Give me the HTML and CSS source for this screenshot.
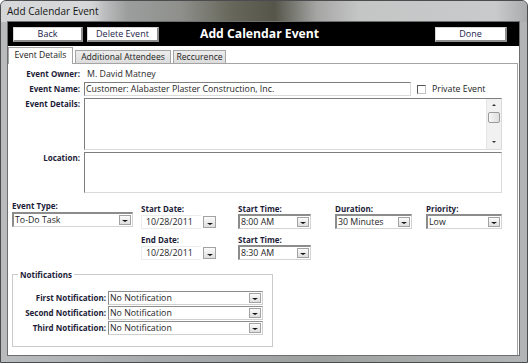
FILE: index.html
```html
<!DOCTYPE html>
<html>
<head>
<meta charset="utf-8">
<link rel="stylesheet" href="styles.css">
</head>
<body>
<div class="window">
  <div class="titlebar"><span class="ttext">Add Calendar Event</span></div>
  <div class="frame">
    <div class="client">
      <div class="header">
        <div class="btn btn-back">Back</div>
        <div class="btn btn-del">Delete Event</div>
        <div class="htitle">Add Calendar Event</div>
        <div class="btn btn-done">Done</div>
      </div>
      <div class="tabs">
        <div class="tab active">Event Details</div>
        <div class="tab t-att">Additional Attendees</div>
        <div class="tab t-rec">Reccurence</div>
      </div>
      <div class="panel">
        <div class="form">
          <div class="lbl">Event Owner:</div>
          <div class="val">M. David Matney</div>

          <div class="lbl lbl-mid">Event Name:</div>
          <div class="namerow">
            <div class="input name-input">Customer: Alabaster Plaster Construction, Inc.</div>
            <div class="check"></div>
            <div class="checklbl">Private Event</div>
          </div>

          <div class="lbl">Event Details:</div>
          <div class="ta ta-details">
            <div class="sb">
              <span class="sb-up"></span>
              <span class="sb-thumb"></span>
              <span class="sb-fill"></span>
              <span class="sb-down"></span>
            </div>
          </div>

          <div class="lbl lbl-loc">Location:</div>
          <div class="ta ta-loc"></div>
        </div>

        <div class="fields">
          <div class="col col-type">
            <div class="flbl">Event Type:</div>
            <div class="select"><span class="sv">To-Do Task</span><span class="arrow"></span></div>
          </div>
          <div class="col col-date">
            <div class="flbl">Start Date:</div>
            <div class="date"><span class="dbox">10/28/2011</span><span class="arrow darrow"></span></div>
            <div class="flbl flbl2">End Date:</div>
            <div class="date"><span class="dbox">10/28/2011</span><span class="arrow darrow"></span></div>
          </div>
          <div class="col col-time">
            <div class="flbl">Start Time:</div>
            <div class="select"><span class="sv">8:00 AM</span><span class="arrow"></span></div>
            <div class="flbl flbl2">Start Time:</div>
            <div class="select"><span class="sv">8:30 AM</span><span class="arrow"></span></div>
          </div>
          <div class="col col-dur">
            <div class="flbl">Duration:</div>
            <div class="select"><span class="sv">30 Minutes</span><span class="arrow"></span></div>
          </div>
          <div class="col col-pri">
            <div class="flbl">Priority:</div>
            <div class="select"><span class="sv">Low</span><span class="arrow"></span></div>
          </div>
        </div>

        <fieldset class="notif">
          <legend>Notifications</legend>
          <div class="ngrid">
            <div class="nlbl">First Notification:</div>
            <div class="select nsel"><span class="sv">No Notification</span><span class="arrow"></span></div>
            <div class="nlbl">Second Notification:</div>
            <div class="select nsel"><span class="sv">No Notification</span><span class="arrow"></span></div>
            <div class="nlbl">Third Notification:</div>
            <div class="select nsel"><span class="sv">No Notification</span><span class="arrow"></span></div>
          </div>
        </fieldset>
      </div>
    </div>
  </div>
</div>
</body>
</html>
```

FILE: styles.css
```css
* { box-sizing: border-box; }
html, body { margin: 0; padding: 0; }
body {
  width: 528px;
  height: 363px;
  overflow: hidden;
  background: #fff;
  font-family: "Open Sans", "Noto Sans", sans-serif;
  font-size: 8.8px;
  color: #222;
}

.window {
  width: 528px;
  height: 363px;
  display: flex;
  flex-direction: column;
  border: 1px solid #4a4c4e;
  border-radius: 6px 6px 0 0;
  background: linear-gradient(90deg, #b9bbbd 0%, #a7a9ab 30%, #9fa1a1 60%, #b2b4b5 100%);
  overflow: hidden;
}

.titlebar {
  flex: none;
  height: 21px;
  padding-left: 6px;
  font-size: 10px;
  line-height: 21px;
  color: #151515;
  background: linear-gradient(90deg, #d4d6d7 0%, #cfd1d2 17%, #9c9e9e 24%, #8f908c 34%, #66665a 44%, #55554a 52%, #a5a6a4 60%, #c4c5c5 68%, #c9cacb 94%, #a9abac 100%);
}
.ttext {
  display: inline-block;
  padding-right: 4px;
  background: linear-gradient(90deg, rgba(214,216,217,0.9) 0%, rgba(214,216,217,0.9) 80%, rgba(214,216,217,0) 100%);
}

.frame {
  flex: 1;
  display: flex;
  padding: 0 8px 7px 7px;
}

.client {
  flex: 1;
  display: flex;
  flex-direction: column;
  background: #fff;
  outline: 1px solid #6c6e70;
}

/* header */
.header {
  height: 24px;
  background: #000;
  display: flex;
  align-items: center;
  padding: 0 12px 0 5px;
}
.btn {
  height: 15px;
  background: #fff;
  border-style: solid;
  border-width: 1px 2px 2px 1px;
  border-color: #d6d6d6 #8e8e8e #8e8e8e #d6d6d6;
  color: #1c1c4a;
  text-align: center;
  font-size: 9px;
  line-height: 12px;
}
.btn-back { width: 70px; }
.btn-del { width: 72px; margin-left: 4px; }
.btn-done { width: 72px; margin-left: auto; }
.htitle {
  margin-left: 41px;
  color: #fff;
  font-weight: bold;
  font-size: 12.2px;
  line-height: 16px;
}

/* tabs */
.tabs {
  height: 17px;
  display: flex;
  align-items: flex-end;
  padding-top: 2px;
  position: relative;
  z-index: 1;
}
.tab {
  height: 13px;
  border: 1px solid #a4a4a4;
  border-bottom: none;
  background: linear-gradient(#ececec, #dcdcdc);
  color: #222;
  font-size: 8.6px;
  line-height: 12px;
  text-align: center;
  margin-left: 2px;
}
.tab.active {
  width: 65px;
  margin-left: 0;
  background: #fff;
  line-height: 14px;
  margin-bottom: -1px;
  height: 17px;
}
.t-att { width: 96px; }
.t-rec { width: 53px; }

/* panel */
.panel {
  flex: 1;
  border-top: 1px solid #a4a4a4;
  border-right: 1px solid #a4a4a4;
  margin-right: 1px;
  padding-top: 4px;
}

.form {
  display: grid;
  grid-template-columns: 72px 418px;
  grid-template-rows: 12px 14px 52px 41px;
  column-gap: 4px;
  row-gap: 2px;
}
.lbl {
  text-align: right;
  font-weight: bold;
  font-size: 8px;
  color: #1c1c38;
  line-height: 12px;
}
.lbl-mid { line-height: 14px; }
.lbl-loc { line-height: 11px; }
.val {
  padding-left: 3px;
  line-height: 12px;
  color: #2a2a2a;
}

.input, .ta {
  border: 1px solid;
  border-color: #7e7e7e #dadada #dadada #7e7e7e;
  background: #fff;
}
.namerow {
  display: flex;
  align-items: center;
}
.name-input {
  width: 327px;
  height: 14px;
  padding-left: 1px;
  line-height: 12px;
  color: #1e1e1e;
  white-space: nowrap;
  overflow: hidden;
}
.check {
  width: 9px;
  height: 9px;
  margin-left: 6px;
  border: 1px solid;
  border-color: #555 #c4c4c4 #c4c4c4 #555;
  background: #fff;
}
.checklbl {
  margin-left: 6px;
  color: #222;
}

.ta-details {
  display: flex;
  justify-content: flex-end;
}
.sb {
  width: 15px;
  background: #f1f1f1;
  border-left: 1px solid #e6e6e6;
  display: flex;
  flex-direction: column;
  align-items: center;
}
.sb-up {
  margin-top: 5px;
  width: 0;
  height: 0;
  border-left: 2px solid transparent;
  border-right: 2px solid transparent;
  border-bottom: 2px solid #333;
}
.sb-thumb {
  margin-top: 6px;
  width: 12px;
  height: 11px;
  border: 1px solid #9a9a9a;
  border-radius: 2px;
  background: linear-gradient(90deg, #f6f6f6, #dedede);
}
.sb-fill { flex: 1; }
.sb-down {
  margin-bottom: 6px;
  width: 0;
  height: 0;
  border-left: 2px solid transparent;
  border-right: 2px solid transparent;
  border-top: 2px solid #333;
}

/* fields */
.fields {
  display: flex;
  align-items: flex-start;
  padding-left: 4px;
  margin-top: 7px;
}
.col { display: flex; flex-direction: column; }
.col-type { width: 121px; }
.col-date { width: 75px; margin-left: 8px; margin-top: 3px; }
.col-time { width: 73px; margin-left: 22px; margin-top: 3px; }
.col-dur { width: 77px; margin-left: 24px; margin-top: 3px; }
.col-pri { width: 76px; margin-left: 14px; margin-top: 3px; }
.flbl {
  font-weight: bold;
  font-size: 8px;
  color: #1c1c38;
  line-height: 11px;
  margin-bottom: 1px;
}
.col-time .flbl, .col-dur .flbl, .col-pri .flbl { margin-bottom: 0; }
.flbl2 { margin-top: 5px; }

.select {
  height: 15px;
  display: flex;
  align-items: center;
  border-style: solid;
  border-width: 2px 1px 1px 2px;
  border-color: #8c8c8c #d4d4d4 #d4d4d4 #8c8c8c;
  background: #fff;
  padding: 0 1px 0 1px;
  color: #1e1e1e;
}
.sv { flex: 1; white-space: nowrap; line-height: 11px; }
.arrow {
  width: 12px;
  height: 10px;
  border: 1px solid #a2a2a2;
  background: linear-gradient(#fbfbfb, #dedede);
  display: flex;
  align-items: flex-end;
  justify-content: center;
  padding-bottom: 2px;
}
.arrow::after {
  content: "";
  width: 0;
  height: 0;
  border-left: 3px solid transparent;
  border-right: 3px solid transparent;
  border-top: 2px solid #111;
}

.date {
  height: 14px;
  display: flex;
  align-items: center;
}
.dbox {
  width: 60px;
  height: 14px;
  border: 1px solid #ececec;
  border-right: none;
  padding-left: 4px;
  line-height: 12px;
  color: #1e1e1e;
}
.darrow {
  margin-left: 2px;
  width: 13px;
  height: 12px;
}

/* notifications */
.notif {
  margin: 9px 0 0 4px;
  width: 261px;
  padding: 0 0 11px 0;
  border: 1px solid #cacaca;
}
.notif legend {
  margin-left: 5px;
  padding: 0 2px;
  font-weight: bold;
  font-size: 8px;
  color: #1c1c38;
  line-height: 11px;
}
.ngrid {
  margin-top: 11px;
  display: grid;
  grid-template-columns: 93px 155px;
  grid-auto-rows: 14px;
  column-gap: 2px;
  row-gap: 1px;
}
.nlbl {
  text-align: right;
  font-weight: bold;
  font-size: 8px;
  color: #1c1c38;
  line-height: 14px;
  white-space: nowrap;
}
.nsel {
  height: 14px;
  border-width: 1px;
  border-color: #8c8c8c #cfcfcf #cfcfcf #8c8c8c;
}
.nsel .arrow { height: 10px; }
```
